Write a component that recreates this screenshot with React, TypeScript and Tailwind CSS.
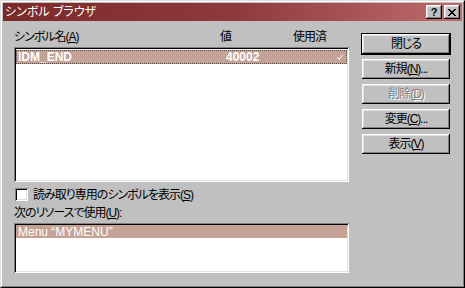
const raised =
  "shadow-[inset_-1px_-1px_#000,inset_1px_1px_#fff,inset_-2px_-2px_#808080,inset_2px_2px_#dfdfdf]";
const sunken =
  "shadow-[inset_1px_1px_#808080,inset_-1px_-1px_#fff,inset_2px_2px_#000,inset_-2px_-2px_#dfdfdf]";

function Key({ k }: { k: string }) {
  return (
    <>
      (<span className="underline underline-offset-1">{k}</span>)
    </>
  );
}

function Btn({
  children,
  primary,
  disabled,
}: {
  children: React.ReactNode;
  primary?: boolean;
  disabled?: boolean;
}) {
  return (
    <button
      className={`h-[20px] w-[88px] flex items-center justify-center bg-[#c0c0c0] text-[12px] leading-none tracking-[-1px] ${raised} ${
        primary ? "outline outline-1 outline-black" : ""
      } ${disabled ? "text-[#808080] [text-shadow:1px_1px_0_#fff]" : "text-black"}`}
    >
      {children}
    </button>
  );
}

export default function App() {
  return (
    <div className="w-[465px] h-[288px] bg-[#c0c0c0] border border-t-[#dfdfdf] border-l-[#dfdfdf] border-r-black border-b-black font-['Liberation_Sans','Noto_Sans_CJK_JP',sans-serif] [font-feature-settings:'palt'] select-none">
      <div className="h-full flex flex-col p-px border border-t-white border-l-white border-r-[#808080] border-b-[#808080]">
        {/* title bar */}
        <div className="h-[18px] flex items-center justify-between px-[2px] bg-gradient-to-r from-[#7b2a2a] via-[#8e3a3a] to-[#bd6c6c]">
          <span className="text-white text-[12px] leading-none">シンボル ブラウザ</span>
          <div className="flex gap-[2px]">
            <div className={`w-[16px] h-[14px] bg-[#c0c0c0] flex items-center justify-center text-[11px] font-bold leading-none ${raised}`}>
              ?
            </div>
            <div className={`w-[16px] h-[14px] bg-[#c0c0c0] flex items-center justify-center ${raised}`}>
              <svg width="8" height="7" viewBox="0 0 8 7">
                <path d="M0 0h2v1h1v1h2V1h1V0h2v1H7v1H6v1H5v1h1v1h1v1h1v1H6V6H5V5H3v1H2v1H0V6h1V5h1V4h1V3H2V2H1V1H0z" fill="#000" />
              </svg>
            </div>
          </div>
        </div>

        {/* body */}
        <div className="flex flex-1 pl-[11px] pt-[9px] gap-[13px]">
          <div className="w-[335px] flex flex-col text-[12px] text-black">
            <div className="h-[14px] flex items-center leading-none">
              <span className="w-[206px] tracking-[-1px]">
                シンボル名<Key k="A" />
              </span>
              <span className="w-[73px]">値</span>
              <span className="tracking-[-1px]">使用済</span>
            </div>

            <div className={`mt-[3px] h-[135px] bg-white pt-[3px] px-[2px] ${sunken}`}>
              <div className="h-[14px] flex items-start bg-[#c4a396] border border-dotted border-[#5a4a44] text-white font-bold leading-[8px] pt-[2px]">
                <span className="w-[209px] pl-[1px]">IDM_END</span>
                <span>40002</span>
                <svg className="ml-auto mr-[3px] mt-[2px]" width="6" height="5" viewBox="0 0 6 5">
                  <path d="M5 0h1v1H5zM4 1h1v1H4zM3 2h1v1H3zM0 2h1v1H0zM1 3h1v1H1zM2 3h1v1H2zM2 4h1v1H2z" fill="#fff" />
                </svg>
              </div>
            </div>

            <div className="mt-[6px] h-[13px] flex items-center gap-[5px]">
              <div className={`ml-[1px] w-[13px] h-[13px] bg-white ${sunken}`} />
              <span className="leading-none tracking-[-1px]">
                読み取り専用のシンボルを表示<Key k="S" />
              </span>
            </div>

            <div className="mt-[5px] h-[14px] flex items-center leading-none">
              <span className="tracking-[-1px]">
                次のリソースで使用<Key k="U" />:
              </span>
            </div>

            <div className={`mt-[3px] h-[50px] bg-white pt-[2px] px-[2px] ${sunken}`}>
              <div className="h-[13px] flex items-center bg-[#c4a396] text-white leading-none pl-[2px]">
                Menu “MYMENU”
              </div>
            </div>
          </div>

          <div className="flex flex-col gap-[5px] mt-[4px]">
            <Btn primary>閉じる</Btn>
            <Btn>
              新規<Key k="N" />...
            </Btn>
            <Btn disabled>
              削除<Key k="D" />
            </Btn>
            <Btn>
              変更<Key k="C" />...
            </Btn>
            <Btn>
              表示<Key k="V" />
            </Btn>
          </div>
        </div>
      </div>
    </div>
  );
}
